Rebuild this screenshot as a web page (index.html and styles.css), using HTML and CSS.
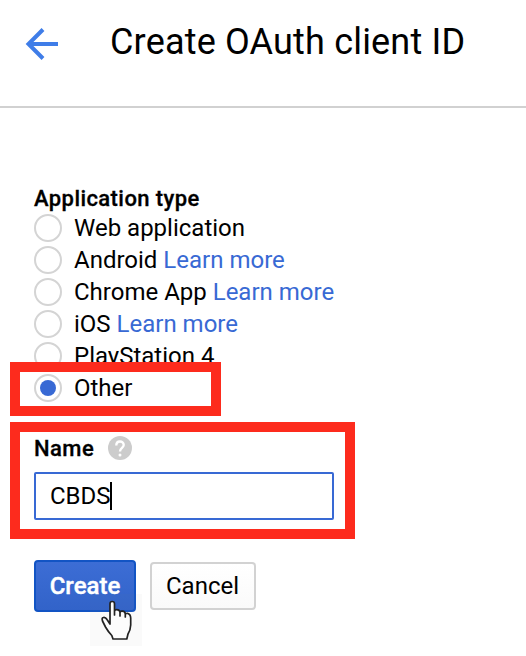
FILE: index.html
```html
<!DOCTYPE html>
<html lang="en">
<head>
<meta charset="utf-8">
<title>Create OAuth client ID</title>
<link rel="stylesheet" href="styles.css">
</head>
<body>
<header class="header">
  <svg class="back" viewBox="0 0 36 36"><path d="M34 18H4M19 3.500L4.500 18L19 32.500" fill="none" stroke="#3f7de8" stroke-width="4"/></svg>
  <h1 class="title"><span>Create OAuth client ID</span></h1>
</header>
<main class="form">
  <div class="label type-label"><span>Application type</span></div>
  <div class="options">
    <label class="option"><i class="radio"></i><span>Web application</span></label>
    <label class="option"><i class="radio"></i><span>Android <a>Learn more</a></span></label>
    <label class="option"><i class="radio"></i><span>Chrome App <a>Learn more</a></span></label>
    <label class="option"><i class="radio"></i><span>iOS <a>Learn more</a></span></label>
    <label class="option"><i class="radio"></i><span>PlayStation 4</span></label>
    <label class="option selected"><i class="radio checked"></i><span>Other</span></label>
  </div>
  <section class="name">
    <div class="label name-label"><span>Name</span>
      <svg class="help" viewBox="0 0 24 24"><circle cx="12" cy="12" r="12" fill="#ccc"/><path d="M8.300 9.500C8.300 4.200 15.700 4.400 15.700 9C15.700 11.800 12 12 12 15.400" fill="none" stroke="#fff" stroke-width="2.400"/><circle cx="12" cy="19" r="1.500" fill="#fff"/></svg>
    </div>
    <div class="input"><span>CBDS</span><i class="caret"></i></div>
  </section>
  <div class="actions">
    <div class="button create"><span>Create</span>
      <svg class="pointer" viewBox="0 0 52 52"><rect width="52" height="52" fill="#888" fill-opacity=".04"/><path d="M20 27.500V9.800Q20 7.500 22.200 7.500Q24.500 7.500 24.500 9.800V21V17.500Q24.500 15.700 26.500 15.700Q30 15.700 30 18.500V22V19Q30 17 32.300 17.200Q35.300 17.500 35.300 20V23V21Q35.600 19 37.500 19.300Q40.600 20 40.700 24V31Q40.500 36 38 40L36.800 45H23L21.800 41.500Q18 37.500 15.500 33L12.500 27Q11.500 23.800 13.300 23.500Q15.500 23 17 25.500L20 30Z" fill="#fcfcfc" stroke="#222" stroke-width="1.700" stroke-linejoin="round"/></svg>
    </div>
    <div class="button cancel"><span>Cancel</span></div>
  </div>
</main>
</body>
</html>
```
FILE: styles.css
```css
*, *::before, *::after { box-sizing: border-box; }
body {
  margin: 0;
  width: 526px;
  height: 656px;
  overflow: hidden;
  background: #fff;
  color: #000;
  font-family: Roboto, "Liberation Sans", sans-serif;
  font-size: 24px;
}
.header {
  display: flex;
  align-items: flex-start;
  height: 108px;
  padding-left: 24px;
  border-bottom: 2px solid #d1d1d1;
}
.back { width: 36px; height: 36px; margin-top: 26px; }
.title {
  margin: 21px 0 0 50px;
  font-size: 36px;
  font-weight: 400;
  letter-spacing: 0.18px;
  line-height: 42px;
  white-space: nowrap;
}
.form { padding: 76px 0 0 34px; }
.label {
  font-size: 22px;
  font-weight: 500;
  line-height: 28px;
  letter-spacing: 0.42px;
  -webkit-text-stroke: 0.3px;
}
.label span { transform: translateY(1px); display: inline-block; }
.option { display: flex; align-items: center; height: 32px; line-height: 32px; white-space: nowrap; }
.options a { color: #3869d4; }
.radio {
  display: grid;
  place-items: center;
  width: 28px;
  height: 28px;
  margin-right: 12px;
  border: 2px solid #d4d4d4;
  border-radius: 50%;
}
.checked::before {
  content: "";
  width: 16px;
  height: 16px;
  border-radius: 50%;
  background: #3869d4;
}
.selected { position: relative; }
.selected::after {
  content: "";
  position: absolute;
  left: -24px;
  top: -10px;
  width: 211px;
  height: 54px;
  border: 10px solid #fd2b1d;
}
.name {
  width: 345px;
  height: 117px;
  margin: 18px 0 0 -24px;
  padding: 2px 14px;
  border: 10px solid #fd2b1d;
}
.name-label { display: flex; align-items: center; }
.name-label span { width: 60px; }
.help { width: 24px; height: 24px; margin-left: 14px; }
.input {
  display: flex;
  align-items: center;
  width: 300px;
  height: 48px;
  margin-top: 10px;
  padding-left: 14px;
  border: 2px solid #3869d4;
  border-radius: 2px;
}
.caret { width: 2px; height: 28px; margin-left: -1px; background: #000; }
.actions { display: flex; align-items: center; gap: 14px; margin-top: 21px; }
.button { display: flex; align-items: center; justify-content: center; border: 2px solid; border-radius: 4px; }
.create {
  position: relative;
  width: 102px;
  height: 52px;
  border-color: #1254c4;
  background: linear-gradient(#3c6dd5, #3263c9);
  color: #fff;
  font-weight: 500;
  -webkit-text-stroke: 0.4px;
}
.pointer { position: absolute; left: 54px; top: 32px; width: 52px; height: 52px; }
.cancel { width: 106px; height: 48px; border-color: #d2d2d2; background: linear-gradient(#fff, #fafafa); }
.cancel span { margin-left: -1px; }
```
